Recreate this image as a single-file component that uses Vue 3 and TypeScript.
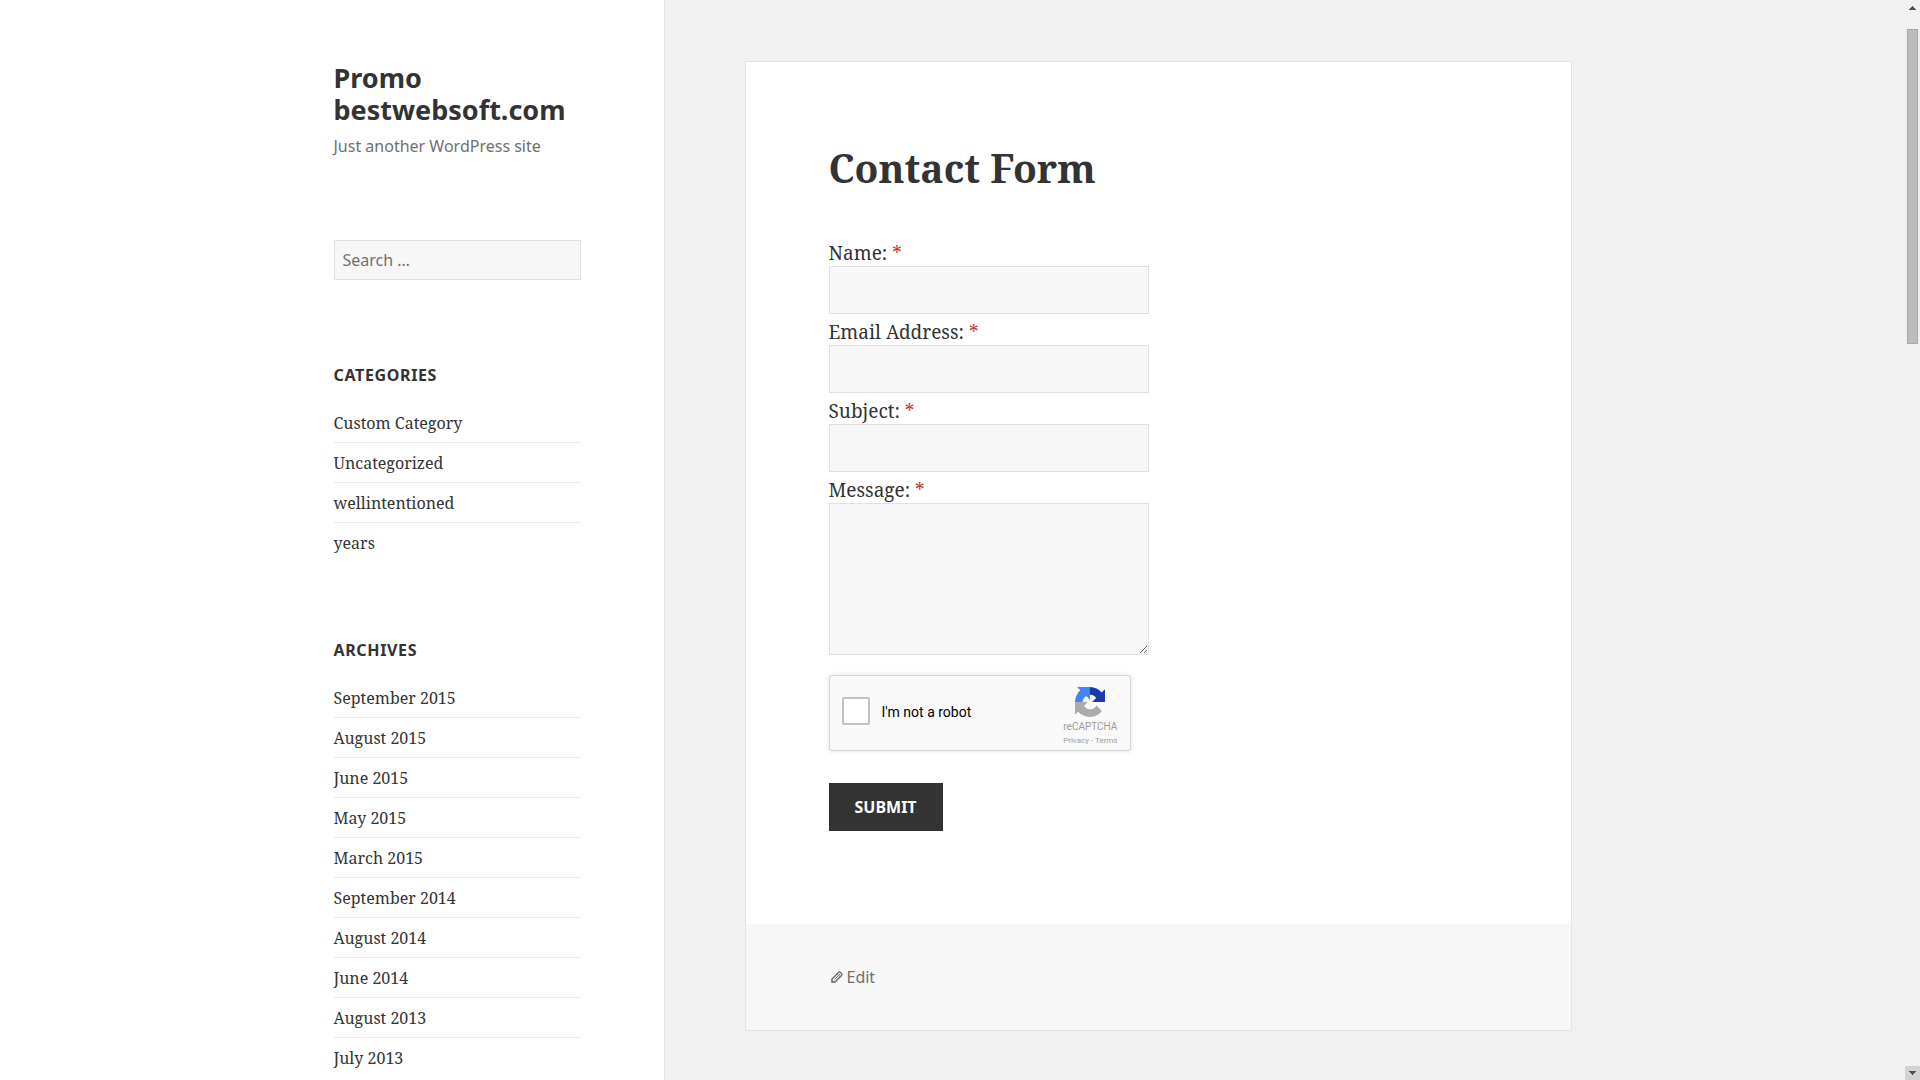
<script setup lang="ts">
import { ref } from 'vue'

interface Widget {
  title: string
  items: string[]
}

interface Field {
  id: string
  label: string
  type: string
}

const widgets: Widget[] = [
  { title: 'Categories', items: ['Custom Category', 'Uncategorized', 'wellintentioned', 'years'] },
  {
    title: 'Archives',
    items: [
      'September 2015',
      'August 2015',
      'June 2015',
      'May 2015',
      'March 2015',
      'September 2014',
      'August 2014',
      'June 2014',
      'August 2013',
      'July 2013',
    ],
  },
]

const fields: Field[] = [
  { id: 'name', label: 'Name:', type: 'text' },
  { id: 'email', label: 'Email Address:', type: 'email' },
  { id: 'subject', label: 'Subject:', type: 'text' },
]

const values = ref<Record<string, string>>({ name: '', email: '', subject: '' })
const message = ref('')
const search = ref('')
const human = ref(false)
</script>

<template>
  <div class="window">
    <div class="page">
      <div class="sidebar">
        <div class="sidebar-inner">
          <header class="branding">
            <p class="site-title"><a href="#">Promo bestwebsoft.com</a></p>
            <p class="tagline">Just another WordPress site</p>
          </header>
          <form role="search" @submit.prevent>
            <input v-model="search" class="search" type="search" placeholder="Search …" aria-label="Search for:" />
          </form>
          <nav v-for="widget in widgets" :key="widget.title" class="widget">
            <h2>{{ widget.title }}</h2>
            <ul>
              <li v-for="item in widget.items" :key="item"><a href="#">{{ item }}</a></li>
            </ul>
          </nav>
        </div>
      </div>

      <main class="content">
        <article>
          <div class="entry">
            <h1>Contact Form</h1>
            <form class="contact" @submit.prevent>
              <div v-for="field in fields" :key="field.id" class="field">
                <label :for="field.id">{{ field.label }} <span class="required">*</span></label>
                <input :id="field.id" v-model="values[field.id]" :type="field.type" />
              </div>
              <div class="field">
                <label for="message">Message: <span class="required">*</span></label>
                <textarea id="message" v-model="message"></textarea>
              </div>

              <div class="captcha">
                <input id="robot" v-model="human" type="checkbox" />
                <label for="robot">I'm not a robot</label>
                <div class="captcha-brand">
                  <svg width="30" height="30" viewBox="0 0 64 64" aria-hidden="true">
                    <path
                      fill="#1c3aa9"
                      d="M64 31.955l-.033-1.37V4.687l-7.16 7.16C50.948 4.674 42.033.093 32.05.093c-10.4 0-19.622 4.96-25.458 12.64l11.736 11.86a15.55 15.55 0 0 1 4.754-5.334c2.05-1.6 4.952-2.906 8.968-2.906.485 0 .86.057 1.135.163 4.976.393 9.288 3.14 11.828 7.124l-8.307 8.307L64 31.953"
                    />
                    <path
                      fill="#4285f4"
                      d="M31.862.094l-1.37.033H4.594l7.16 7.16C4.58 13.147 0 22.06 0 32.046c0 10.4 4.96 19.622 12.64 25.458L24.5 45.768a15.55 15.55 0 0 1-5.334-4.754c-1.6-2.05-2.906-4.952-2.906-8.968 0-.485.057-.86.163-1.135.393-4.976 3.14-9.288 7.124-11.828l8.307 8.307L31.86.095"
                    />
                    <path
                      fill="#ababab"
                      d="M.001 32.045l.033 1.37v25.898l7.16-7.16c5.86 7.173 14.774 11.754 24.76 11.754 10.4 0 19.622-4.96 25.458-12.64l-11.736-11.86a15.55 15.55 0 0 1-4.754 5.334c-2.05 1.6-4.952 2.906-8.968 2.906-.485 0-.86-.057-1.135-.163-4.976-.393-9.288-3.14-11.828-7.124l8.307-8.307c-10.522.04-22.4.066-27.295-.005"
                    />
                  </svg>
                  <span class="captcha-name">reCAPTCHA</span>
                  <span class="captcha-links"><a href="#">Privacy</a> - <a href="#">Terms</a></span>
                </div>
              </div>

              <button type="submit">Submit</button>
            </form>
          </div>
          <footer>
            <a href="#">
              <svg width="16" height="16" viewBox="0 0 16 16" fill="none" stroke="currentColor" aria-hidden="true">
                <path d="M3 13V10L9.500 3.500Q10.500 2.500 11.500 3.500L12.500 4.500Q13.500 5.500 12.500 6.500L6 13Z" stroke-width="1.500" />
                <path d="M5.500 10.500L11 5M8 4.800L11.200 8" stroke-width="1" />
                <path d="M2.500 10.500L5.500 13.500H2.500Z" fill="currentColor" stroke="none" />
              </svg>
              <span>Edit</span>
            </a>
          </footer>
        </article>
      </main>
    </div>

    <div class="scrollbar" aria-hidden="true">
      <svg class="arrow" width="15" height="14" viewBox="0 0 15 14" shape-rendering="crispEdges">
        <path fill="#505050" d="M7 6h1v1h1v1h1v1h1v1H4V9h1V8h1V7h1z" />
      </svg>
      <div class="thumb"></div>
      <svg class="arrow arrow-down" width="15" height="14" viewBox="0 0 15 14" shape-rendering="crispEdges">
        <path fill="#505050" d="M4 5h7v1h-1v1H9v1H8v1H7V8H6V7H5V6H4z" />
      </svg>
    </div>
  </div>
</template>

<style>
body {
  margin: 0;
  background: #f1f1f1;
}
</style>

<style scoped>
.window {
  --sans: 'Noto Sans', sans-serif;
  --serif: 'Noto Serif', 'Droid Serif', 'Liberation Serif', serif;
  --ink: #333;
  --muted: #707070;
  display: flex;
  height: 100vh;
  overflow: hidden;
  background: #f1f1f1;
  color: var(--ink);
  font-family: var(--serif);
}

.window * {
  box-sizing: border-box;
}

h1,
h2,
p,
ul {
  margin: 0;
  padding: 0;
}

a {
  color: inherit;
  text-decoration: none;
}

.page {
  display: flex;
  flex: 1;
  min-width: 0;
}

.sidebar {
  display: flex;
  flex: 0 0 calc(50% - 289px);
  justify-content: flex-end;
  background: #fff;
  box-shadow: 0 0 0 1px rgba(0, 0, 0, 0.05);
}

.sidebar-inner {
  width: 100%;
  max-width: 413px;
  padding: 62px 83px 0;
}

.site-title {
  font: 700 27px/32px var(--sans);
}

.tagline {
  margin-top: 8px;
  color: var(--muted);
  font: 16px/24px var(--sans);
}

.search {
  display: block;
  width: 100%;
  height: 40px;
  margin-top: 82px;
  padding: 0 8px;
  border: 1px solid #e0e0e0;
  border-radius: 0;
  background: #f7f7f7;
  color: var(--muted);
  font: 16px/24px var(--sans);
  appearance: none;
}

.search::placeholder {
  color: var(--muted);
  opacity: 1;
}

.widget {
  margin-top: 83px;
}

.widget h2 {
  margin-bottom: 24px;
  font: 700 16px/24px var(--sans);
  letter-spacing: 0.04em;
  text-transform: uppercase;
}

.widget ul {
  list-style: none;
}

.widget li {
  padding: 8px 0 7px;
  border-top: 1px solid #eaeaea;
  font-size: 16px;
  line-height: 24px;
}

.widget li:first-child {
  padding-top: 0;
  border-top: 0;
}

.widget li:last-child {
  padding-bottom: 0;
}

.content {
  flex: 1;
  min-width: 0;
  padding: 62px 82px 0;
}

article {
  max-width: 825px;
  background: #fff;
  box-shadow: 0 0 0 1px rgba(0, 0, 0, 0.05);
}

.entry {
  padding: 82px 83px 93px;
}

h1 {
  margin-bottom: 43px;
  font: 700 39px/48px var(--serif);
}

.field {
  display: flex;
  flex-direction: column;
  align-items: flex-start;
}

.field label {
  padding-top: 6px;
  font-size: 19px;
  line-height: 25px;
}

.required {
  color: #c0392b;
}

.field input,
textarea {
  width: 320px;
  max-width: 100%;
  height: 48px;
  padding: 8px;
  border: 1px solid #e0e0e0;
  border-radius: 0;
  background: #f7f7f7;
  color: var(--ink);
  font: 16px/24px var(--sans);
}

.field textarea {
  height: 152px;
}

.captcha {
  display: flex;
  align-items: center;
  width: 302px;
  height: 76px;
  margin-top: 20px;
  padding: 0 12px;
  border: 1px solid #d3d3d3;
  border-radius: 3px;
  background: #f9f9f9;
  box-shadow: 0 0 4px 1px rgba(0, 0, 0, 0.08);
  color: #000;
  font: 14px/18px Roboto, sans-serif;
}

.captcha input {
  width: 28px;
  height: 28px;
  margin: 0 12px 4px 0;
  border: 2px solid #c1c1c1;
  border-radius: 2px;
  background: #fff;
  appearance: none;
}

.captcha label {
  margin-bottom: 2px;
}

.captcha-brand {
  display: flex;
  flex-direction: column;
  align-items: center;
  align-self: flex-start;
  margin: 11px 0 0 auto;
  color: #9b9b9b;
}

.captcha-name {
  margin-top: 2px;
  font-size: 10px;
  line-height: 16px;
}

.captcha-links {
  font-size: 8px;
  line-height: 12px;
}

button {
  display: block;
  height: 48px;
  margin-top: 32px;
  padding: 0 26px;
  border: 0;
  background: var(--ink);
  color: #fff;
  font: 700 16px/24px var(--sans);
  text-transform: uppercase;
}

footer {
  padding: 41px 83px;
  background: #f7f7f7;
  color: var(--muted);
  font: 16px/24px var(--sans);
}

footer a {
  display: flex;
  align-items: center;
  gap: 2px;
}

.scrollbar {
  display: flex;
  flex: 0 0 15px;
  flex-direction: column;
}

.arrow {
  display: block;
}

.arrow-down {
  margin-top: auto;
  background: #d2d2d2;
}

.thumb {
  height: 315px;
  margin: 15px 2px 0;
  border: 1px solid #a8a8a8;
  background: #bcbcbc;
}
</style>
